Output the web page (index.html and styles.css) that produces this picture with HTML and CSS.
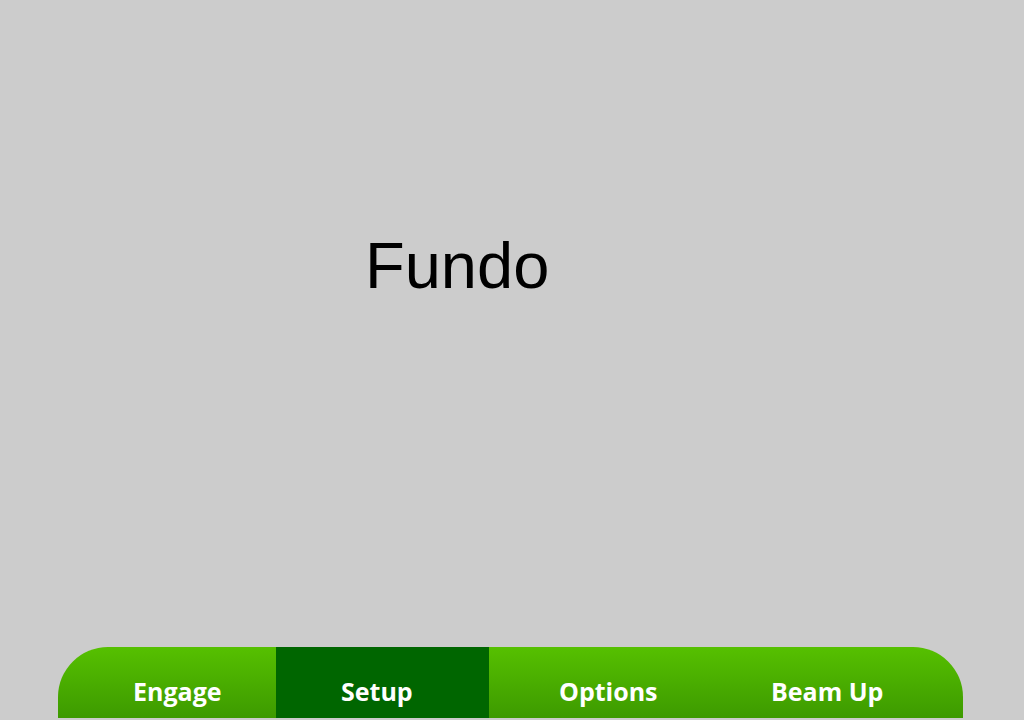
FILE: index.html
```html
<!DOCTYPE html>
<html>
<head>
<meta charset="utf-8">
<link rel="stylesheet" href="styles.css">
</head>
<body>
<div class="screen">
  <main class="content">
    <h1 class="title">Fundo</h1>
  </main>
  <nav class="tabbar">
    <a class="tab tab-engage">Engage</a>
    <a class="tab tab-setup active">Setup</a>
    <a class="tab tab-options">Options</a>
    <a class="tab tab-beam">Beam Up</a>
  </nav>
</div>
</body>
</html>
```
FILE: styles.css
```css
html, body {
  margin: 0;
  padding: 0;
  background: #cccccc;
}
.screen {
  width: 1024px;
  height: 720px;
  display: flex;
  flex-direction: column;
}
.content {
  flex: 1;
  padding-top: 234px;
  padding-left: 365px;
}
.title {
  margin: 0;
  font-family: "Liberation Sans", Arial, sans-serif;
  font-weight: normal;
  font-size: 65px;
  line-height: 64px;
  color: #000;
}
.tabbar {
  display: flex;
  height: 71px;
  margin: 0 61px 2px 58px;
  border-radius: 50px 50px 0 0;
  overflow: hidden;
  background: linear-gradient(to bottom, #56c000 0%, #3d9a00 100%);
}
.tab {
  display: flex;
  align-items: flex-end;
  padding-bottom: 10px;
  box-sizing: border-box;
  font-family: "Open Sans", sans-serif;
  font-weight: bold;
  font-size: 25px;
  color: #fff;
  text-decoration: none;
}
.tab-engage { width: 218px; padding-left: 75px; }
.tab-setup { width: 213px; padding-left: 65px; }
.tab-options { width: 230px; padding-left: 70px; }
.tab-beam { flex: 1; padding-left: 52px; }
.tab.active { background: #006600; }
```
